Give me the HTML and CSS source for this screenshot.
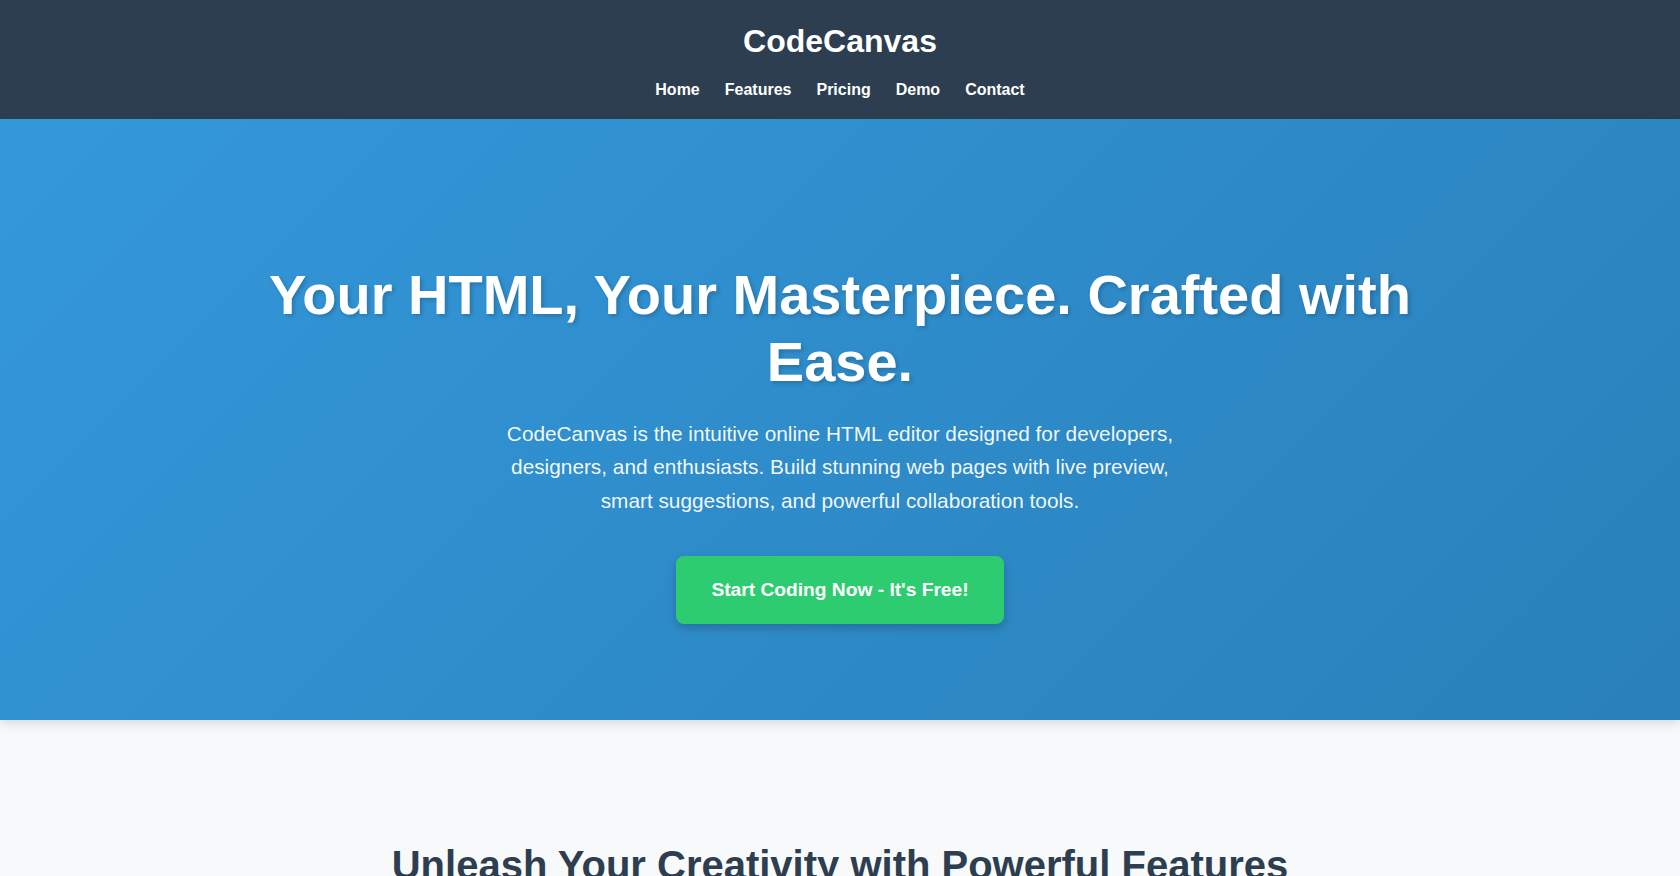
FILE: index.html
```html
<!DOCTYPE html>
<html lang="en">
<head>
<meta charset="utf-8">
<title>CodeCanvas</title>
<link rel="stylesheet" href="styles.css">
</head>
<body>
<header class="site-header">
  <div class="logo">CodeCanvas</div>
  <nav class="main-nav">
    <a href="#">Home</a>
    <a href="#">Features</a>
    <a href="#">Pricing</a>
    <a href="#">Demo</a>
    <a href="#">Contact</a>
  </nav>
</header>
<section class="hero">
  <h1 class="hero-title">Your HTML, Your Masterpiece. Crafted with Ease.</h1>
  <p class="hero-text">CodeCanvas is the intuitive online HTML editor designed for developers, designers, and enthusiasts. Build stunning web pages with live preview, smart suggestions, and powerful collaboration tools.</p>
  <a class="cta-button" href="#">Start Coding Now - It's Free!</a>
</section>
<section class="features">
  <h2 class="section-title">Unleash Your Creativity with Powerful Features</h2>
</section>
</body>
</html>
```
FILE: styles.css
```css
* { box-sizing: border-box; }
html, body {
  margin: 0;
  padding: 0;
}
body {
  font-family: "Liberation Sans", Arial, Helvetica, sans-serif;
  line-height: 1.6;
  color: #333;
  background: #f8f9fa;
}
.site-header {
  background: #2c3e50;
  color: #fff;
  text-align: center;
  padding: 16px 20px 16px;
}
.logo {
  font-size: 32px;
  font-weight: bold;
  line-height: 1.6;
}
.main-nav {
  margin-top: 10px;
  display: flex;
  justify-content: center;
  gap: 25px;
}
.main-nav a {
  color: #fff;
  text-decoration: none;
  font-weight: bold;
  font-size: 16px;
}
.hero {
  position: relative;
  z-index: 1;
  background: linear-gradient(135deg, #3498db 0%, #2980b9 100%);
  color: #fff;
  text-align: center;
  padding: 142px 20px 96px;
  box-shadow: 0 4px 10px rgba(0, 0, 0, 0.12);
}
.hero-title {
  margin: 0 auto 22px;
  font-size: 56px;
  line-height: 1.2;
  max-width: 1200px;
  text-shadow: 2px 2px 4px rgba(0, 0, 0, 0.2);
}
.hero-text {
  margin: 0 auto 39px;
  max-width: 700px;
  font-size: 20.8px;
  line-height: 1.6;
  color: rgba(255, 255, 255, 0.95);
}
.cta-button {
  display: inline-block;
  background: #2ecc71;
  color: #fff;
  text-decoration: none;
  font-weight: bold;
  font-size: 19.2px;
  line-height: 1.6;
  padding: 18.6px 35.2px;
  border-radius: 8px;
  box-shadow: 0 4px 10px rgba(0, 0, 0, 0.2);
}
.features {
  padding: 80px 20px;
  text-align: center;
}
.section-title {
  margin: 33px 0 0;
  font-size: 40px;
  line-height: 1.6;
  color: #2c3e50;
}
```
